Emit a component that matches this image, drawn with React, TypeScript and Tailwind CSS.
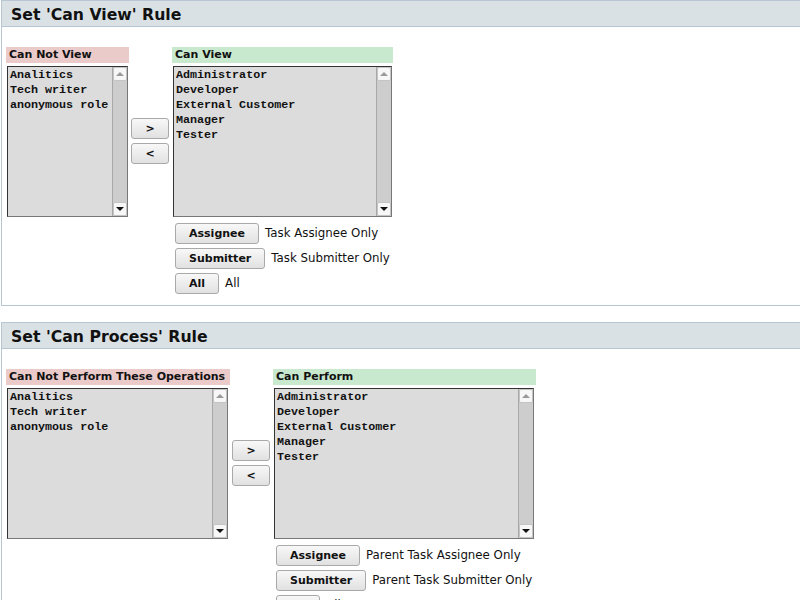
const sans = "font-['DejaVu_Sans',Verdana,sans-serif]";

const roles = ["Administrator", "Developer", "External Customer", "Manager", "Tester"];
const others = ["Analitics", "Tech writer", "anonymous role"];

function ListBox({ items, width }: { items: string[]; width: string }) {
  return (
    <div
      className={`ml-px flex h-[151px] ${width} border border-t-[#333] border-l-[#333] border-r-[#777] border-b-[#777] bg-[#dcdcdc]`}
    >
      <ul className="flex-1 pl-[2px] pt-px font-['Liberation_Mono','Courier_New',monospace] text-[11.7px] font-bold leading-[15px] text-[#111]">
        {items.map((item) => (
          <li key={item} className="whitespace-pre">
            {item}
          </li>
        ))}
      </ul>
      {/* fake scrollbar */}
      <div className="flex w-[15px] flex-col border-l border-[#a8a8a8] bg-[#cdcdcd]">
        <div className="flex h-[14px] items-center justify-center rounded-[2px] border border-[#c4c4c4] bg-[#f7f7f7]">
          <div className="h-0 w-0 border-x-[4px] border-b-[4px] border-x-transparent border-b-[#9a9a9a]" />
        </div>
        <div className="flex-1" />
        <div className="flex h-[14px] items-center justify-center rounded-[2px] border border-[#c4c4c4] bg-[#f7f7f7]">
          <div className="h-0 w-0 border-x-[4px] border-t-[4px] border-x-transparent border-t-[#111]" />
        </div>
      </div>
    </div>
  );
}

function Btn({ children, className = "" }: { children: React.ReactNode; className?: string }) {
  return (
    <button
      className={`flex h-[21px] items-center justify-center rounded-[3px] border border-[#a9a9a9] bg-gradient-to-b from-[#f8f8f8] to-[#e1e1e1] px-[13px] text-[11px] font-bold leading-none text-[#111] ${className}`}
    >
      {children}
    </button>
  );
}

function OptionRow({ label, text }: { label: string; text: string }) {
  return (
    <div className="flex items-start gap-[6px]">
      <Btn>{label}</Btn>
      <span className="mt-[3px] text-[11.8px] leading-[14px] text-[#111]">{text}</span>
    </div>
  );
}

function RuleSection({
  title,
  leftLabel,
  rightLabel,
  leftW,
  rightW,
  prefix,
}: {
  title: string;
  leftLabel: string;
  rightLabel: string;
  leftW: [string, string];
  rightW: [string, string];
  prefix: string;
}) {
  return (
    <section className="ml-px w-[840px] border border-[#b6c6d3]">
      <div className="h-[26px] border-b border-[#b6c6d3] bg-[#dae1e5] pl-[9px] pt-px text-[15.7px] font-bold leading-[26px] text-[#111]">
        {title}
      </div>
      <div className="flex items-start pb-[11px] pl-[4px] pt-[20px]">
        <div className={leftW[0]}>
          <div className="mb-[3px] h-[16px] bg-[#ebcaca] pl-[3px] text-[11px] font-bold leading-[16px] text-[#111]">
            {leftLabel}
          </div>
          <ListBox items={others} width={leftW[1]} />
        </div>
        <div className="ml-[2px] mt-[71px] flex w-[38px] flex-col gap-[4px]">
          <Btn className="px-0">&gt;</Btn>
          <Btn className="px-0">&lt;</Btn>
        </div>
        <div className={`ml-[3px] ${rightW[0]}`}>
          <div className="mb-[3px] h-[16px] bg-[#c9e9cf] pl-[3px] text-[11px] font-bold leading-[16px] text-[#111]">
            {rightLabel}
          </div>
          <ListBox items={roles} width={rightW[1]} />
          <div className="ml-[3px] mt-[6px] flex flex-col gap-[4px]">
            <OptionRow label="Assignee" text={`${prefix}Task Assignee Only`} />
            <OptionRow label="Submitter" text={`${prefix}Task Submitter Only`} />
            <OptionRow label="All" text="All" />
          </div>
        </div>
      </div>
    </section>
  );
}

export default function App() {
  return (
    <div className={`h-[600px] w-[800px] overflow-hidden bg-white ${sans}`}>
      <RuleSection
        title="Set 'Can View' Rule"
        leftLabel="Can Not View"
        rightLabel="Can View"
        leftW={["w-[123px]", "w-[121px]"]}
        rightW={["w-[221px]", "w-[219px]"]}
        prefix=""
      />
      <div className="mt-[16px]">
        <RuleSection
          title="Set 'Can Process' Rule"
          leftLabel="Can Not Perform These Operations"
          rightLabel="Can Perform"
          leftW={["w-[224px]", "w-[221px]"]}
          rightW={["w-[263px]", "w-[260px]"]}
          prefix="Parent "
        />
      </div>
    </div>
  );
}
